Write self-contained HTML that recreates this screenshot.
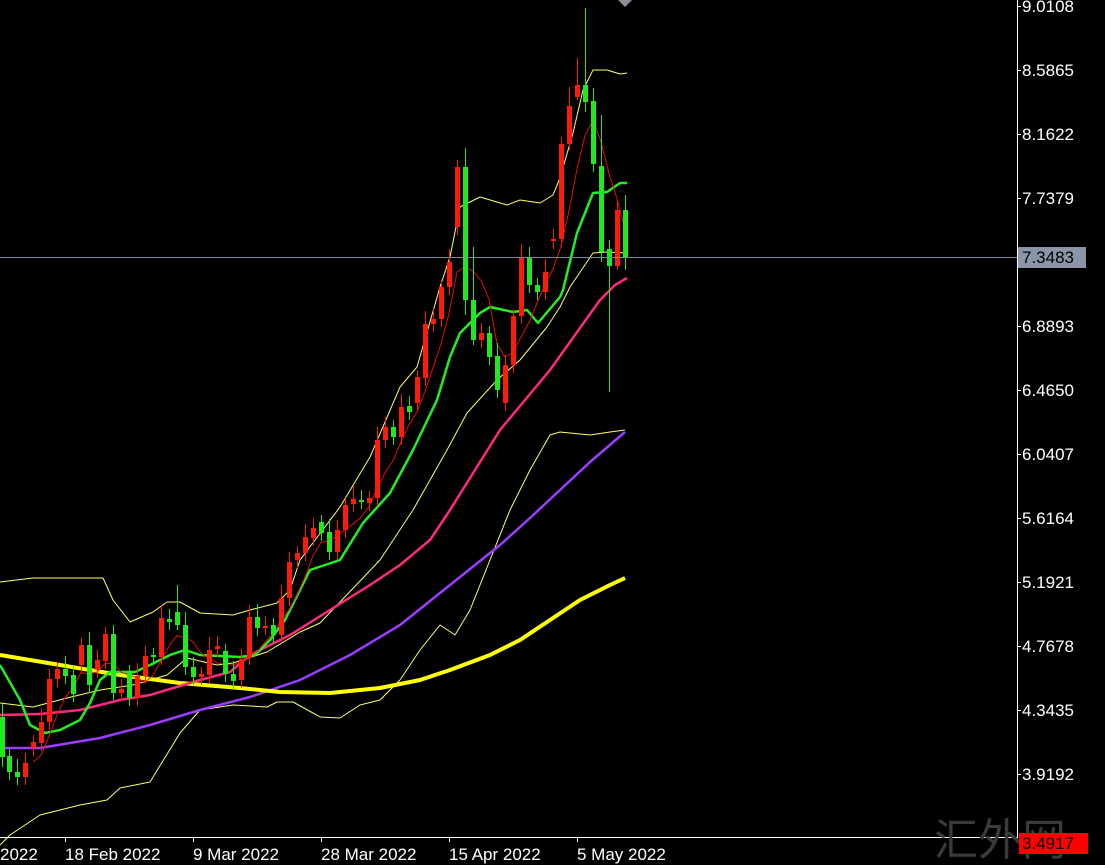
<!DOCTYPE html>
<html><head><meta charset="utf-8"><style>
html,body{margin:0;padding:0;background:#000;width:1105px;height:865px;overflow:hidden}
svg{display:block}
text{font-family:"Liberation Sans","Noto Sans CJK SC",sans-serif}
</style></head><body>
<svg id="c" width="1105" height="865" xmlns="http://www.w3.org/2000/svg">
<rect width="1105" height="865" fill="#000"/>
<g id="lines"></g>
<g id="candles"></g>
<line x1="0" y1="257.5" x2="1017" y2="257.5" stroke="#7b8aa0" stroke-width="1"/>
<line x1="1017.5" y1="0" x2="1017.5" y2="838" stroke="#fff" stroke-width="1"/>
<line x1="0" y1="837.5" x2="1018" y2="837.5" stroke="#fff" stroke-width="1"/>
<polygon points="618,0 632,0 625,7" fill="#8a8f99"/>
<text x="1000" y="855" font-size="44" fill="#3a3a3a" font-family="'Noto Serif CJK SC',serif" text-anchor="middle">汇外网</text>
<g font-size="17" fill="#fff" id="axis"></g>
<rect x="1018" y="247" width="68" height="21" fill="#8a96a6"/>
<text x="1022" y="263" font-size="17" fill="#000">7.3483</text>
<rect x="1019" y="833" width="69" height="21" fill="#ff0000"/>
<text x="1022" y="849" font-size="17" fill="#000">3.4917</text>
<g font-size="17" fill="#fff">
<text x="0" y="860">2022</text>
<text x="65" y="860">18 Feb 2022</text>
<text x="193" y="860">9 Mar 2022</text>
<text x="321" y="860">28 Mar 2022</text>
<text x="449" y="860">15 Apr 2022</text>
<text x="577" y="860">5 May 2022</text>
</g>
<g stroke="#fff"><line x1="65.5" y1="838" x2="65.5" y2="842"/><line x1="193.5" y1="838" x2="193.5" y2="842"/><line x1="321.5" y1="838" x2="321.5" y2="842"/><line x1="449.5" y1="838" x2="449.5" y2="842"/><line x1="577.5" y1="838" x2="577.5" y2="842"/></g>
</svg>
<script>
var NS="http://www.w3.org/2000/svg";
function el(p,t,a){var e=document.createElementNS(NS,t);for(var k in a)e.setAttribute(k,a[k]);p.appendChild(e);return e;}
var ax=document.getElementById('axis');
[["9.0108",6],["8.5865",70],["8.1622",134],["7.7379",198],["6.8893",326],["6.4650",390],["6.0407",454],["5.6164",518],["5.1921",582],["4.7678",646],["4.3435",710],["3.9192",774]].forEach(function(l){
 var t=el(ax,'text',{x:1022,y:l[1]+6});t.textContent=l[0];
 el(ax,'line',{x1:1017,y1:l[1]+.5,x2:1021,y2:l[1]+.5,stroke:'#fff'});
});
var C=[[2,717,757],[9,756,772],[17,772,777],[25,777,763],[33,748,742],[41,743,722],[49,722,679],[57,679,669],[65,669,676],[73,675,694],[81,665,645],[89,645,685],[97,670,660],[105,661,634],[113,634,693],[121,693,689],[129,672,698],[137,698,676],[145,676,656],[153,655,657],[161,657,618],[169,619,622],[177,612,625],[185,625,667],[193,667,677],[201,677,674],[209,675,650],[217,649,646],[225,651,674],[233,674,681],[241,680,659],[249,658,617],[257,617,628],[265,627,626],[273,625,635],[281,635,598],[289,598,562],[297,560,553],[305,553,537],[313,538,528],[321,522,533],[329,532,552],[337,552,530],[345,530,505],[353,504,499],[361,500,501],[369,503,498],[377,498,440],[385,440,427],[393,427,437],[401,437,407],[409,406,412],[417,403,377],[425,378,324],[433,324,319],[441,319,287],[449,287,262],[457,227,167],[465,167,300],[473,300,340],[481,340,333],[489,333,357],[497,356,390],[505,403,365],[513,365,316],[521,316,257],[529,257,285],[537,285,292],[545,292,272],[553,241,239],[561,239,144],[569,144,106],[577,97,85],[585,85,102],[593,101,164],[601,166,252],[609,249,266],[617,266,210],[625,210,257]];
var special={457:[160,235],465:[148,315],473:[247,345],585:[8,112],577:[58,100],569:[87,150],601:[115,262],609:[240,392],617:[200,270],625:[195,270],177:[585,630],249:[605,665],113:[625,700]};
var cg=document.getElementById('candles');
C.forEach(function(c){
 var x=c[0],o=c[1],cl=c[2],top=Math.min(o,cl),bot=Math.max(o,cl);
 var up=cl<o; var col=up?'#ff1a0a':'#1eea1e';
 var h=special[x]?special[x][0]:top-7-(x%3)*3, l=special[x]?special[x][1]:bot+6+(x%4)*2;
 el(cg,'line',{x1:x+.5,y1:h,x2:x+.5,y2:l,stroke:col,'stroke-width':1});
 el(cg,'rect',{x:x-2,y:top,width:5,height:Math.max(bot-top,2),fill:col});
});
var lg=document.getElementById('lines');
function pl(pts,col,w){el(lg,'polyline',{points:pts,fill:'none',stroke:col,'stroke-width':w,'stroke-linejoin':'round'});}
pl("0,845 10,835 40,815 80,805 107,800 120,788 150,782 180,733 200,710 233,705 267,707 277,702 293,702 313,713 320,717 340,718 360,705 380,700 400,680 420,650 440,625 455,635 470,610 490,560 510,510 530,470 550,435 560,432 590,435 610,432 625,430","#ffff66",1);
pl("0,582 33,578 103,578 113,600 130,622 153,612 167,602 180,602 200,613 233,615 250,610 277,603 290,590 300,560 340,507 370,457 400,387 417,367 440,287 450,257 460,207 480,197 507,205 520,200 540,203 553,195 560,178 573,133 583,90 593,70 607,70 620,74 627,73","#ffff66",1);
pl("0,703 33,707 67,698 100,690 133,685 167,675 187,658 217,665 233,663 267,652 300,632 320,623 380,560 413,510 447,450 467,413 497,380 520,360 547,327 560,307 570,287 593,253 607,252 627,253","#ffff66",1);
pl("0,748 40,748 100,738 150,725 200,710 250,697 300,680 350,655 400,625 450,585 500,545 530,518 560,490 590,462 625,432","#9b3cff",2.5);
pl("0,655 60,665 120,675 180,683 240,688 280,692 330,693 380,688 420,680 450,670 490,655 520,640 550,620 580,600 610,585 625,578","#ffff00",4);
pl("0,715 40,714 80,710 120,700 150,695 200,680 230,672 250,655 290,635 330,610 370,585 400,565 430,540 450,510 475,470 500,430 525,400 550,370 575,335 600,300 615,285 627,278","#ff2a80",2.5);
pl("0,665 20,700 30,725 45,733 60,730 80,720 90,703 100,680 110,672 135,672 150,665 170,655 185,650 200,655 240,657 255,655 270,640 285,620 300,590 310,570 340,560 363,523 390,493 413,450 437,400 450,357 460,333 480,313 490,307 513,312 527,310 538,323 560,297 563,290 577,233 593,193 607,192 620,183 627,183","#22ee22",2.5);
var pts=[];for(var i=4;i<C.length;i++){var s=0;for(var j=i-4;j<=i;j++)s+=C[j][2];pts.push(C[i][0]+','+(s/5).toFixed(1));}
pl(pts.join(' '),'#e01010',1);
</script>
</body></html>
